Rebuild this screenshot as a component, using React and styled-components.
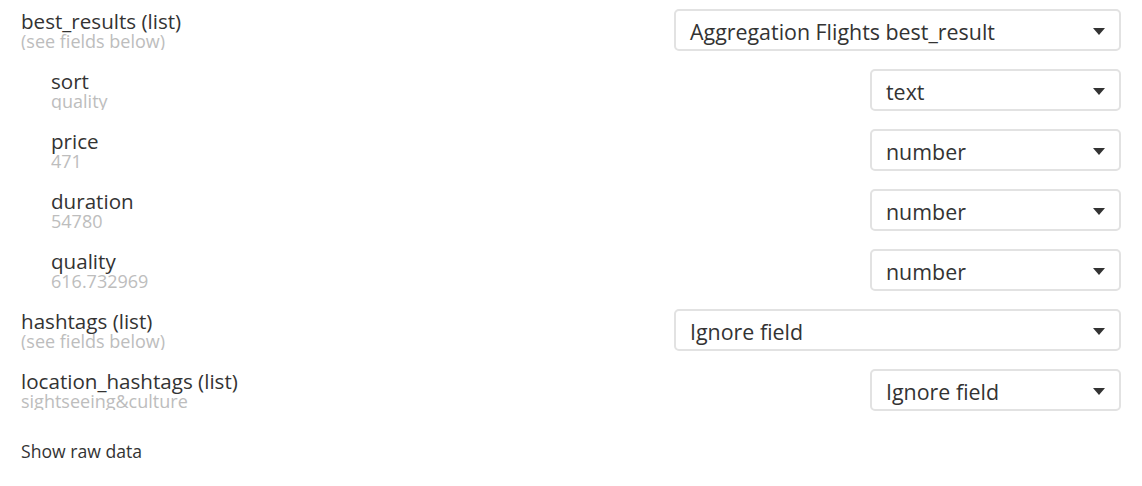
import React from "react";
import styled, { createGlobalStyle } from "styled-components";

const Global = createGlobalStyle`
  html, body { margin: 0; padding: 0; background: #fff; }
  body { font-family: "Open Sans", "Liberation Sans", sans-serif; color: #333; }
`;

const Page = styled.div`
  padding: 0 21px;
  width: 1142px;
  box-sizing: border-box;
`;

const Row = styled.div`
  display: flex;
  justify-content: space-between;
  align-items: flex-start;
  height: 60px;
  padding-left: ${(p) => (p.$nested ? 30 : 0)}px;
`;

const LabelBlock = styled.div`
  padding-top: 10px;
  display: flex;
  flex-direction: column;
`;

const Name = styled.div`
  font-size: 20.6px;
  line-height: 22px;
  color: #333;
`;

const Sample = styled.div`
  font-size: 18px;
  line-height: 18px;
  height: 18px;
  overflow: hidden;
  color: #bdbdbd;
`;

const Select = styled.div`
  margin-top: 9px;
  box-sizing: border-box;
  width: ${(p) => (p.$nested ? 251 : 447)}px;
  height: 42px;
  border: 2px solid #e2e2e2;
  border-radius: 5px;
  display: flex;
  align-items: center;
  justify-content: space-between;
  padding: 3px 14px 0 14px;
  font-size: 21.4px;
  color: #333;
`;

const Caret = styled.span`
  width: 0;
  height: 0;
  border-left: 6px solid transparent;
  border-right: 6px solid transparent;
  border-top: 7px solid #333;
  margin-top: 0px;
`;

const RawLink = styled.div`
  margin-top: 20px;
  font-size: 17.6px;
  line-height: 22px;
  color: #333;
`;

const rows = [
  { name: "best_results (list)", sample: "(see fields below)", value: "Aggregation Flights best_result" },
  { name: "sort", sample: "quality", value: "text", nested: true },
  { name: "price", sample: "471", value: "number", nested: true },
  { name: "duration", sample: "54780", value: "number", nested: true },
  { name: "quality", sample: "616.732969", value: "number", nested: true },
  { name: "hashtags (list)", sample: "(see fields below)", value: "Ignore field" },
  { name: "location_hashtags (list)", sample: "sightseeing&culture", value: "Ignore field", short: true },
];

export default function App() {
  return (
    <>
      <Global />
      <Page>
        {rows.map((r, i) => (
          <Row key={i} $nested={r.nested}>
            <LabelBlock>
              <Name>{r.name}</Name>
              <Sample>{r.sample}</Sample>
            </LabelBlock>
            <Select $nested={r.nested || r.short}>
              <span>{r.value}</span>
              <Caret />
            </Select>
          </Row>
        ))}
        <RawLink>Show raw data</RawLink>
      </Page>
    </>
  );
}
